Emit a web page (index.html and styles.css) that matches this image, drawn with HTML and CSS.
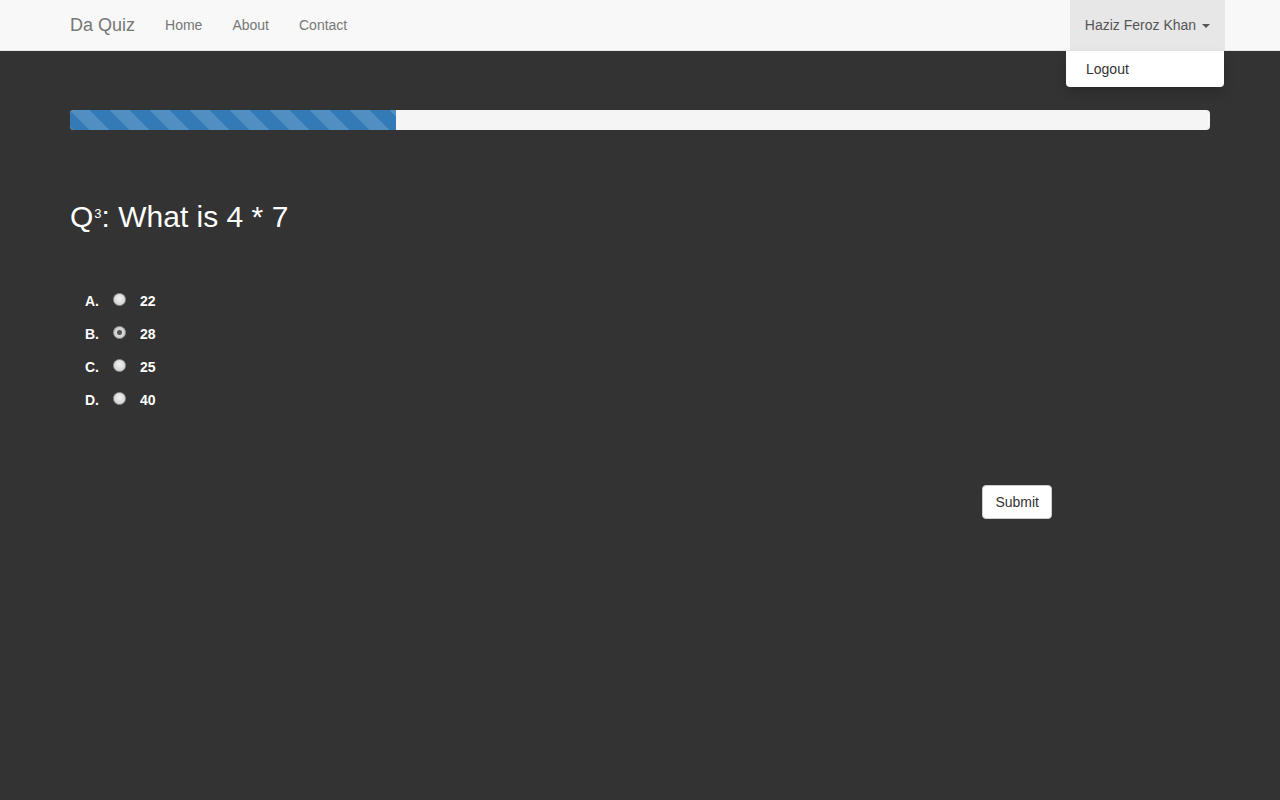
FILE: index.html
```html
<!DOCTYPE html>
<html lang="en">
<head>
  <meta charset="UTF-8">
  <title>Da Quiz</title>
  <link rel="stylesheet" href="styles.css">
</head>
<body>
  <nav class="navbar">
    <div class="container nav-inner">
      <div class="nav-left">
        <a class="brand" href="#">Da Quiz</a>
        <a class="nav-link" href="#">Home</a>
        <a class="nav-link" href="#">About</a>
        <a class="nav-link" href="#">Contact</a>
      </div>
      <div class="dropdown">
        <a class="dropdown-toggle" href="#">Haziz Feroz Khan <span class="caret"></span></a>
        <div class="dropdown-menu">
          <a href="#">Logout</a>
        </div>
      </div>
    </div>
  </nav>

  <div class="container main">
    <div class="progress">
      <div class="progress-bar" style="width: 28.57%"></div>
    </div>

    <h2 class="question">Q<sup>3</sup>: What is 4 * 7</h2>

    <ol class="options">
      <li><span class="letter">A.</span><input type="radio" name="answer" value="22"><span class="answer">22</span></li>
      <li><span class="letter">B.</span><input type="radio" name="answer" value="28" checked><span class="answer">28</span></li>
      <li><span class="letter">C.</span><input type="radio" name="answer" value="25"><span class="answer">25</span></li>
      <li><span class="letter">D.</span><input type="radio" name="answer" value="40"><span class="answer">40</span></li>
    </ol>

    <div class="actions">
      <button class="btn">Submit</button>
    </div>
  </div>
</body>
</html>
```

FILE: styles.css
```css
body {
  margin: 0;
  font-family: 'Liberation Sans', Arial, sans-serif;
  font-size: 14px;
  line-height: 1.42857;
  background: #333;
  color: #fff;
}
a {
  text-decoration: none;
}
.container {
  width: 1140px;
  margin: 0 auto;
}
.navbar {
  height: 50px;
  background: #f8f8f8;
  border-bottom: 1px solid #e7e7e7;
}
.nav-inner {
  display: flex;
  justify-content: space-between;
  height: 50px;
}
.nav-left {
  display: flex;
  align-items: center;
}
.brand {
  font-size: 18px;
  line-height: 20px;
  color: #777;
  padding: 15px 15px 15px 0;
}
.nav-link {
  color: #777;
  line-height: 20px;
  padding: 15px;
}
.dropdown {
  position: relative;
  margin-right: -15px;
}
.dropdown-toggle {
  display: block;
  padding: 15px 15px 15px 15px;
  line-height: 20px;
  color: #555;
  background: #e7e7e7;
}
.caret {
  display: inline-block;
  width: 0;
  height: 0;
  margin-left: 2px;
  vertical-align: middle;
  border-top: 4px solid #555;
  border-left: 4px solid transparent;
  border-right: 4px solid transparent;
}
.dropdown-menu {
  position: absolute;
  top: 51px;
  right: 1px;
  width: 158px;
  padding: 5px 0;
  background: #fff;
  border-radius: 0 0 4px 4px;
  box-shadow: 0 6px 12px rgba(0,0,0,0.175);
}
.dropdown-menu a {
  display: block;
  padding: 4px 20px 2px;
  color: #333;
}
.main {
  padding-top: 59px;
}
.progress {
  height: 20px;
  background: #f5f5f5;
  border-radius: 4px;
  overflow: hidden;
}
.progress-bar {
  height: 100%;
  background-color: #337ab7;
  background-image: linear-gradient(45deg, rgba(255,255,255,.15) 25%, transparent 25%, transparent 50%, rgba(255,255,255,.15) 50%, rgba(255,255,255,.15) 75%, transparent 75%, transparent);
  background-size: 40px 40px;
}
.question {
  font-size: 30px;
  font-weight: 400;
  line-height: 33px;
  margin: 70px 0 0;
}
.question sup {
  font-size: 13px;
  vertical-align: baseline;
  position: relative;
  top: -9px;
  margin-left: 1px;
}
.options {
  list-style: none;
  margin: 46px 0 0;
  padding: 0 0 0 15px;
}
.options li {
  display: flex;
  align-items: center;
  height: 33px;
  font-weight: bold;
}
.letter {
  width: 28px;
}
.options input {
  appearance: none;
  width: 13px;
  height: 13px;
  margin: -4px 14px 0 0;
  border-radius: 50%;
  border: 1px solid #9a9a9a;
  background: radial-gradient(circle at 50% 40%, #f2f2f2, #c8c8c8);
}
.options input:checked {
  background: radial-gradient(circle, #555 0 2px, #8a8a8a 2.5px, #d8d8d8 3px, #c4c4c4);
}
.actions {
  display: flex;
  justify-content: flex-end;
  padding-right: 158px;
  margin-top: 68px;
}
.btn {
  font-family: inherit;
  font-size: 14px;
  line-height: 20px;
  padding: 6px 12px;
  color: #333;
  background: #fff;
  border: 1px solid #ccc;
  border-radius: 4px;
}
```
